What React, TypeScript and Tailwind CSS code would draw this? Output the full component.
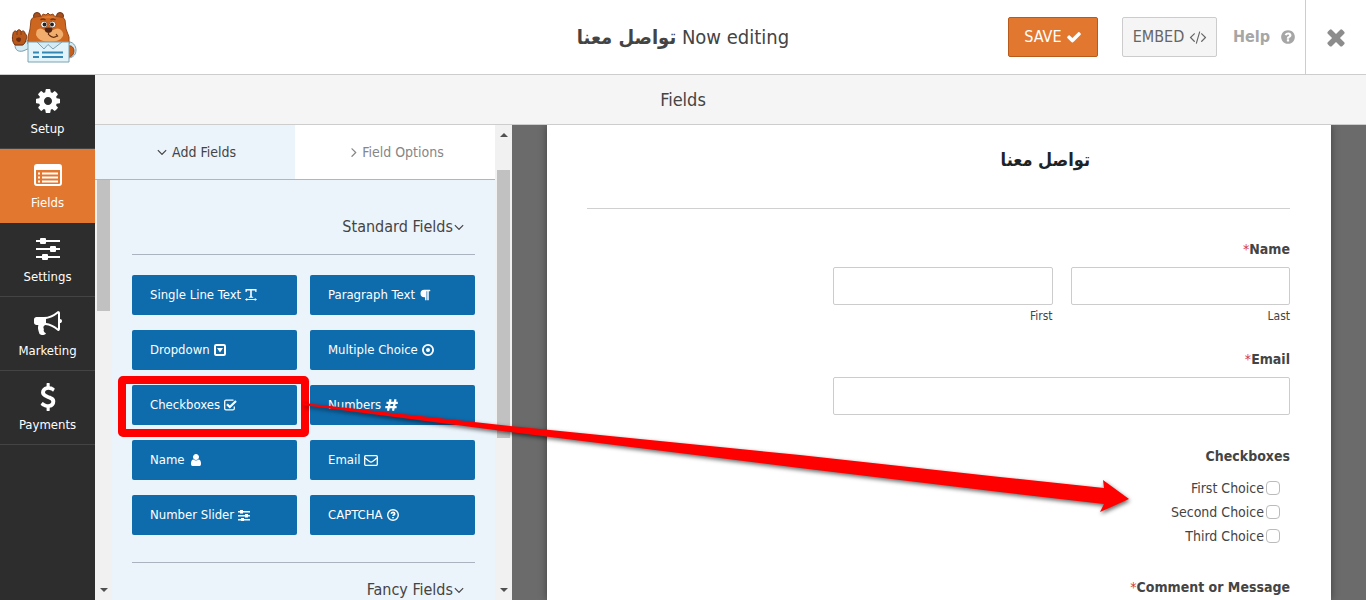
import type { ReactNode } from 'react';
import { FaParagraph } from 'react-icons/fa';

const paths = {
  cog: 'M1152 896q0-106-75-181t-181-75-181 75-75 181 75 181 181 75 181-75 75-181zm512-109v222q0 12-8 23t-20 13l-185 28q-19 54-39 91 35 50 107 138 10 12 10 25t-9 23q-27 37-99 108t-94 71q-12 0-26-9l-138-108q-44 23-91 38-16 136-29 186-7 28-36 28h-222q-14 0-24.5-8.5t-11.5-21.5l-28-184q-49-16-90-37l-141 107q-10 9-25 9-14 0-25-11-126-114-165-168-7-10-7-23 0-12 8-23 15-21 51-66.5t54-70.5q-27-50-41-99l-183-27q-13-2-21-12.5t-8-23.5v-222q0-12 8-23t19-13l186-28q14-46 39-92-40-57-107-138-10-12-10-24 0-10 9-23 26-36 98.5-107.5t94.5-71.5q13 0 26 10l138 107q44-23 91-38 16-136 29-186 7-28 36-28h222q14 0 24.5 8.5t11.5 21.5l28 184q49 16 90 37l142-107q9-9 24-9 13 0 25 10 129 119 165 170 7 8 7 22 0 12-8 23-15 21-51 66.5t-54 70.5q26 50 41 98l183 28q13 2 21 12.5t8 23.5z',
  bullhorn: 'M1664 640q53 0 90.5 37.5t37.5 90.5-37.5 90.5-90.5 37.5v384q0 52-38 90t-90 38q-417-347-812-380-58 19-91 66t-31 100.5 40 92.5q-20 33-23 65.5t6 58 33.5 55 48 50 61.5 50.5q-29 58-111.5 83t-168.5 11.5-132-55.5q-7-23-29.5-87.5t-32-94.5-23-89-15-101 3.5-98.5 22-110.5h-122q-66 0-113-47t-47-113v-192q0-66 47-113t113-47h480q435 0 896-384 52 0 90 38t38 90v384zm-128 604v-954q-394 302-768 343v270q377 42 768 341z',
  dollar: 'M1362 1185q0 153-99.5 263.5t-258.5 136.5v175q0 14-9 23t-23 9h-135q-13 0-22.5-9.5t-9.5-22.5v-175q-66-9-127.5-31t-101.5-44.5-74-48-46.5-37.5-17.5-18q-17-21-2-41l103-135q7-10 23-12 15-2 24 9l2 2q113 99 243 125 37 8 74 8 81 0 142.5-43t61.5-122q0-28-15-53t-33.5-42-58.5-37.5-66-32-80-32.5q-39-16-61.5-25t-61.5-26.5-62.5-31-56.5-35.5-53.5-42.5-43.5-49-35.5-58-21-66.5-8.5-78q0-138 98-242t255-134v-180q0-13 9.5-22.5t22.5-9.5h135q14 0 23 9t9 23v176q57 6 110.5 23t87 33.5 63.5 37.5 39 29 15 14q17 18 5 38l-81 146q-8 15-23 16-14 3-27-7-3-3-14.5-12t-39-26.5-58.5-32-74.5-26-85.5-11.5q-95 0-155 43t-60 111q0 26 8.5 48t29.5 41.5 39.5 33 56 31 60.5 27 70 27.5q53 20 81 31.5t76 35 75.5 42.5 62 50 53 63.5 31.5 76.5 13 94z',
  check: 'M1671 566q0 40-28 68l-724 724-136 136q-28 28-68 28t-68-28l-136-136-362-362q-28-28-28-68t28-68l136-136q28-28 68-28t68 28l294 295 656-657q28-28 68-28t68 28l136 136q28 28 28 68z',
  times: 'M1490 1322q0 40-28 68l-136 136q-28 28-68 28t-68-28l-294-294-294 294q-28 28-68 28t-68-28l-136-136q-28-28-28-68t28-68l294-294-294-294q-28-28-28-68t28-68l136-136q28-28 68-28t68 28l294 294 294-294q28-28 68-28t68 28l136 136q28 28 28 68t-28 68l-294 294 294 294q28 28 28 68z',
  code: 'M553 1399l-50 50q-10 10-23 10t-23-10l-466-466q-10-10-10-23t10-23l466-466q10-10 23-10t23 10l50 50q10 10 10 23t-10 23l-393 393 393 393q10 10 10 23t-10 23zm591-1067l-373 1291q-4 13-15.5 19.5t-23.5 2.5l-62-17q-13-4-19.5-15.5t-2.5-24.5l373-1291q4-13 15.5-19.5t23.5-2.5l62 17q13 4 19.5 15.5t2.5 24.5zm657 651l-466 466q-10 10-23 10t-23-10l-50-50q-10-10-10-23t10-23l393-393-393-393q-10-10-10-23t10-23l50-50q10-10 23-10t23 10l466 466q10 10 10 23t-10 23z',
  help: 'M1024 1376v-192q0-14-9-23t-23-9h-192q-14 0-23 9t-9 23v192q0 14 9 23t23 9h192q14 0 23-9t9-23zm256-672q0-88-55.5-163t-138.5-116-170-41q-243 0-371 213-15 24 8 42l132 100q7 6 19 6 16 0 25-12 53-68 86-92 34-24 86-24 48 0 85.5 26t37.5 59q0 38-20 61t-68 45q-63 28-115.5 86.5t-52.5 125.5v36q0 14 9 23t23 9h192q14 0 23-9t9-23q0-19 21.5-49.5t54.5-49.5q32-18 49-28.5t46-35 44.5-48 28-60.5 12.5-81zm384 192q0 209-103 385.5t-279.5 279.5-385.5 103-385.5-103-279.5-279.5-103-385.5 103-385.5 279.5-279.5 385.5-103 385.5 103 279.5 279.5 103 385.5z',
  angleDown: 'M1395 736q0 13-10 23l-466 466q-10 10-23 10t-23-10l-466-466q-10-10-10-23t10-23l50-50q10-10 23-10t23 10l393 393 393-393q10-10 23-10t23 10l50 50q10 10 10 23z',
  angleRight: 'M1171 960q0 13-10 23l-466 466q-10 10-23 10t-23-10l-50-50q-10-10-10-23t10-23l393-393-393-393q-10-10-10-23t10-23l50-50q10-10 23-10t23 10l466 466q10 10 10 23z',
  user: 'M1536 1399q0 109-62.5 187t-150.5 78h-854q-88 0-150.5-78t-62.5-187q0-85 8.5-160.5t31.5-152 58.5-131 94-89 134.5-34.5q131 128 313 128t313-128q76 0 134.5 34.5t94 89 58.5 131 31.5 152 8.5 160.5zm-256-887q0 159-112.5 271.5t-271.5 112.5-271.5-112.5-112.5-271.5 112.5-271.5 271.5-112.5 271.5 112.5 112.5 271.5z',
};

const Icon = ({ name, className }: { name: keyof typeof paths; className: string }) => (
  <svg viewBox="0 0 1792 1792" fill="currentColor" className={`shrink-0 overflow-visible ${className}`} aria-hidden="true">
    <path d={paths[name]} />
  </svg>
);

const ListIcon = () => (
  <svg viewBox="0 0 28 22" className="h-[22px] w-7" fill="none" stroke="currentColor" aria-hidden="true">
    <rect x="1" y="1" width="26" height="20" rx="2" strokeWidth="2" />
    <path d="M1 3.5h26" strokeWidth="5" />
    <path d="M4 9.5h2M4 13.5h2M4 17.5h2M8 9.5h16M8 13.5h16M8 17.5h16" strokeWidth="1.8" />
  </svg>
);

const SlidersIcon = () => (
  <svg viewBox="0 0 24 22" className="h-[22px] w-6" stroke="currentColor" fill="currentColor" aria-hidden="true">
    <path d="M0 3h24M0 11h24M0 19h24" strokeWidth="2" />
    <g stroke="none">
      <rect x="4" y="0" width="6" height="6" rx="1" />
      <rect x="14" y="8" width="6" height="6" rx="1" />
      <rect x="6" y="16" width="6" height="6" rx="1" />
    </g>
  </svg>
);

const SmallSlidersIcon = () => (
  <svg viewBox="0 0 12 11" className="h-[11px] w-3" fill="currentColor" aria-hidden="true">
    <path d="M0 1h12v1.500H0zM0 5h12v1.500H0zM0 9h12v1.500H0z" />
    <path d="M2 0h3v3.500H2zM7 4h3v3.500H7zM3 8h3v3H3z" />
  </svg>
);

const TextWidthIcon = () => (
  <svg viewBox="0 0 12 12" className="size-3" fill="currentColor" aria-hidden="true">
    <path d="M.5 0h11v3h-1l-.6-1.400H6.800v5.900l1.400.4v.8H3.800v-.8l1.400-.4V1.600H2.100L1.500 3h-1z" />
    <path d="M0 10.500 2.200 8.900v1h7.600v-1L12 10.500 9.800 12v-.9H2.200v.9z" />
  </svg>
);

const HashIcon = () => (
  <svg viewBox="0 0 13 12" className="h-3 w-[13px]" fill="none" stroke="currentColor" strokeWidth="2.200" aria-hidden="true">
    <path d="M5.500.3 3 11.700M10.500.3 8 11.700M1.500 3.800h11.300M.3 8.200h11.300" />
  </svg>
);

const CaretSquareIcon = () => (
  <svg viewBox="0 0 12 12" className="size-3" aria-hidden="true">
    <rect x="1" y="1" width="10" height="10" rx="1.2" fill="none" stroke="currentColor" strokeWidth="2" />
    <path d="M3 4h6L6 8.5z" fill="currentColor" />
  </svg>
);

const DotCircleIcon = () => (
  <svg viewBox="0 0 12 12" className="size-3" aria-hidden="true">
    <circle cx="6" cy="6" r="5.1" fill="none" stroke="currentColor" strokeWidth="1.8" />
    <circle cx="6" cy="6" r="2" fill="currentColor" />
  </svg>
);

const CheckSquareIcon = () => (
  <svg viewBox="0 0 13 12" className="h-3 w-[13px]" fill="none" stroke="currentColor" aria-hidden="true">
    <path d="M9.5 1.2H2A1.3 1.3 0 0 0 .7 2.500v7A1.300 1.300 0 0 0 2 10.800h7a1.300 1.300 0 0 0 1.300-1.300V7.500" strokeWidth="1.3" />
    <path d="M3 5.200 5.800 8 12 2" strokeWidth="2.200" />
  </svg>
);

const EnvelopeIcon = () => (
  <svg viewBox="0 0 14 11" className="h-[11px] w-3.5" fill="none" stroke="currentColor" strokeWidth="1.3" aria-hidden="true">
    <rect x=".7" y=".7" width="12.6" height="9.6" rx="1" />
    <path d="M1 3l4.500 3.600q1.500 1.200 3 0L13 3" />
  </svg>
);

const QuestionCircleIcon = () => (
  <svg viewBox="0 0 12 12" className="size-3" fill="none" stroke="currentColor" aria-hidden="true">
    <circle cx="6" cy="6" r="5.300" strokeWidth="1.400" />
    <path d="M4.200 4.700Q4.700 3.400 6 3.400q1.700 0 1.700 1.300 0 .8-.9 1.200-.8.400-.8 1.100" strokeWidth="1.700" />
    <path d="M6 7.900v1.400" strokeWidth="1.700" />
  </svg>
);

const Logo = () => (
  <svg viewBox="0 0 66 52" className="h-[52px] w-[66px]" role="img" aria-label="WPForms">
    {/* sleeves */}
    <path d="M4 34c0 5 3 7 8 6l7-3v-8q-6 1-7 5z" fill="#d5ebf3" stroke="#7a9cab" />
    <path d="M56 31c6-1 9 4 9 8s-2 7-7 8z" fill="#d5ebf3" stroke="#7a9cab" />
    <path d="M57 35c4-1 6 2 6 5s-2 6-6 6z" fill="#c65f1c" stroke="#793817" strokeWidth=".8" />
    {/* hand */}
    <path d="M4 34C1 31 1 26 2 23c0-3 3-4 4-2 0-3 4-3 4 0 2-2 4-1 4 2 2 0 2 3 1 6-1 3-2 5-4 5z" fill="#b9581b" stroke="#743313" />
    <path d="M5 28c1-2 5-2 5 0s-1 3-2 3-3-1-3-3z" fill="#6d2f13" />
    <path d="M6 21v3M10 21v3" stroke="#743313" strokeWidth=".8" />
    {/* head */}
    <circle cx="26" cy="5" r="3.500" fill="#a84f1b" stroke="#6f3417" />
    <circle cx="49" cy="5" r="3.500" fill="#a84f1b" stroke="#6f3417" />
    <path d="M20 9q1-3 5-3l6-1 1-2 3 1 2-2 2 2 3-1 1 2 6 1q4 0 5 3l1 9 3 8v7H17v-7l2-8z" fill="#cd6720" stroke="#964819" />
    <path d="M31 7q7-2 13 0" fill="none" stroke="#e07b31" strokeWidth="2" />
    <path d="M26 19q3-3 7 0l4-2 5 2q5-3 8 0 3 3 2 6-3 6-14 6-10 0-13-7 0-3 1-5z" fill="#f0ad6c" />
    <circle cx="33" cy="13.500" r="3.300" fill="#fff" stroke="#743313" strokeWidth=".7" />
    <circle cx="41.500" cy="13.500" r="3.300" fill="#fff" stroke="#743313" strokeWidth=".7" />
    <circle cx="33.500" cy="13.500" r="1.900" fill="#25211f" />
    <circle cx="41" cy="13.500" r="1.900" fill="#25211f" />
    <path d="M29.500 9q2.500-2 5 0M39.500 9q2.500-2 5 0" fill="none" stroke="#743313" strokeWidth="1.300" />
    <path d="M33.500 17.500q4-2 8 0 0 4-4 4.500-4-.5-4-4.500z" fill="#502414" />
    <path d="M37.500 21v3M38 24q4 4 8 1M45 23l2 2.500" fill="none" stroke="#66300f" strokeWidth="1.200" />
    {/* shirt */}
    <path d="M17 31h41v20H17z" fill="#e2f4f9" stroke="#7da2b2" strokeLinejoin="round" />
    <path d="M26 31l7 7 4-4.500 5 4.500 9-7z" fill="#d4ebf3" stroke="#7da2b2" />
    <path d="M22 41.500h6M31 41.500h21M22 46h6M31 46h21" stroke="#3287b5" strokeWidth="2" />
  </svg>
);

const menuItems: { label: string; icon: ReactNode; active?: boolean }[] = [
  { label: 'Setup', icon: <Icon name="cog" className="size-7" /> },
  { label: 'Fields', icon: <ListIcon />, active: true },
  { label: 'Settings', icon: <SlidersIcon /> },
  { label: 'Marketing', icon: <Icon name="bullhorn" className="size-7" /> },
  { label: 'Payments', icon: <Icon name="dollar" className="size-7" /> },
];

const standardFields: { label: string; icon: ReactNode }[] = [
  { label: 'Single Line Text', icon: <TextWidthIcon /> },
  { label: 'Paragraph Text', icon: <FaParagraph className="size-3" /> },
  { label: 'Dropdown', icon: <CaretSquareIcon /> },
  { label: 'Multiple Choice', icon: <DotCircleIcon /> },
  { label: 'Checkboxes', icon: <CheckSquareIcon /> },
  { label: 'Numbers', icon: <HashIcon /> },
  { label: 'Name', icon: <Icon name="user" className="size-3.5" /> },
  { label: 'Email', icon: <EnvelopeIcon /> },
  { label: 'Number Slider', icon: <SmallSlidersIcon /> },
  { label: 'CAPTCHA', icon: <QuestionCircleIcon /> },
];

const choices = ['First Choice', 'Second Choice', 'Third Choice'];

const Required = () => <span className="font-normal text-[#d63638]">*</span>;

const ScrollArrow = ({ up }: { up?: boolean }) => (
  <svg viewBox="0 0 8 4" className="mx-auto h-1 w-2 shrink-0" fill="#505050" aria-hidden="true">
    <path d={up ? 'M0 4h8L4 0z' : 'M0 0h8L4 4z'} />
  </svg>
);

const Header = () => (
  <header className="grid h-[75px] shrink-0 grid-cols-[1fr_auto_1fr] items-center border-b border-[#cdcdcd] bg-white">
    <div className="pl-[11px]">
      <Logo />
    </div>
    <h1 dir="rtl" className="text-xl">
      Now editing <strong>تواصل معنا</strong>
    </h1>
    <div className="flex h-full items-center justify-end">
      <button className="mr-6 flex h-10 w-[90px] items-center justify-center gap-1 rounded-xs border border-[#b85a1b] bg-[#e27730] text-base text-white">
        SAVE
        <Icon name="check" className="size-4" />
      </button>
      <button className="mr-4 flex h-10 w-[95px] items-center justify-center gap-1.5 rounded-xs border border-[#ccc] bg-[#f5f5f5] text-base text-[#666]">
        EMBED
        <Icon name="code" className="size-4" />
      </button>
      <a href="#help" className="flex items-center gap-2.5 pr-[9px] text-base font-bold text-[#a6a6a6]">
        Help
        <Icon name="help" className="size-4" />
      </a>
      <button aria-label="Close" className="flex h-full w-[61px] items-center justify-center border-l border-[#cdcdcd] text-[#8c8c8c]">
        <Icon name="times" className="size-[26px]" />
      </button>
    </div>
  </header>
);

const Sidebar = () => (
  <nav className="w-[95px] shrink-0 bg-[#2d2d2d]">
    {menuItems.map((item) => (
      <a
        key={item.label}
        href={`#${item.label.toLowerCase()}`}
        className={`flex h-[74px] flex-col items-center border-b pt-3 text-[13px] leading-4 text-white ${item.active ? 'border-[#e27730] bg-[#e27730]' : 'border-[#444]'
          }`}
      >
        <span className="mb-1.5 flex h-7 items-center">{item.icon}</span>
        {item.label}
      </a>
    ))}
  </nav>
);

const FieldsPanel = () => (
  <section className="flex w-[417px] shrink-0 bg-[#ebf3fb]">
    <div className="flex min-w-0 flex-1 flex-col">
      <div className="flex h-[55px] shrink-0 border-b border-[#b0b6bd] text-sm">
        <button className="flex flex-1 items-center justify-center gap-0.5">
          <Icon name="angleDown" className="size-4" />
          Add Fields
        </button>
        <button className="flex flex-1 items-center justify-center bg-white text-[#868686]">
          <Icon name="angleRight" className="size-4" />
          Field Options
        </button>
      </div>
      <div className="flex min-h-0 flex-1">
        <div className="flex w-[17px] shrink-0 flex-col justify-between bg-[#f1f1f1] pb-2">
          <div className="mx-auto h-[131px] w-[13px] bg-[#c1c1c1]" />
          <ScrollArrow />
        </div>
        <div className="min-w-0 flex-1 overflow-hidden px-5 pt-9">
          <h3 className="flex items-center justify-end border-b border-[#aab4be] pr-2 pb-4 text-base leading-[22px]">
            Standard Fields
            <Icon name="angleDown" className="-ml-0.5 size-4" />
          </h3>
          <div className="mt-5 grid grid-cols-2 gap-x-[13px] gap-y-[15px]">
            {standardFields.map((field) => (
              <button key={field.label} className="flex h-10 items-center gap-1 rounded-xs bg-[#0e6cad] pl-[18px] text-[13px] text-white">
                {field.label}
                {field.icon}
              </button>
            ))}
          </div>
          <h3 className="mt-[27px] flex items-center justify-end border-t border-[#aab4be] pt-4 pr-2 text-base leading-[22px]">
            Fancy Fields
            <Icon name="angleDown" className="-ml-0.5 size-4" />
          </h3>
        </div>
      </div>
    </div>
    <div className="flex w-[17px] shrink-0 flex-col bg-[#f1f1f1] py-2">
      <ScrollArrow up />
      <div className="mx-auto mt-[33px] mb-auto h-[268px] w-[13px] bg-[#c1c1c1]" />
      <ScrollArrow />
    </div>
  </section>
);

const inputClass = 'h-[38px] w-full rounded-xs border border-[#ccc] bg-white';

const FormPreview = () => (
  <main className="min-w-0 flex-1 overflow-hidden bg-[#6b6b6b] px-[35px]">
    <form className="h-full bg-white pt-5 pr-[41px] pl-10 text-right text-sm leading-5 shadow-[0_0_8px_rgba(0,0,0,0.4)]">
      <h2 className="border-b border-[#d0d0d0] pr-[200px] pb-[33px] text-lg leading-[30px] font-bold text-[#1d2327]">تواصل معنا</h2>

      <fieldset className="mt-[30px]">
        <legend className="ml-auto font-bold">
          <Required />Name
        </legend>
        <div className="mt-2 ml-auto flex w-[65%] gap-[18px] text-xs leading-[14px]">
          <label className="flex flex-1 flex-col gap-1">
            <input type="text" className={inputClass} />
            First
          </label>
          <label className="flex flex-1 flex-col gap-1">
            <input type="text" className={inputClass} />
            Last
          </label>
        </div>
      </fieldset>

      <div className="mt-[26px]">
        <label htmlFor="email" className="block font-bold">
          <Required />Email
        </label>
        <div className="mt-2 ml-auto flex w-[65%]">
          <input id="email" type="email" className={inputClass} />
        </div>
      </div>

      <fieldset className="mt-[31px]">
        <legend className="ml-auto font-bold">Checkboxes</legend>
        <div className="mt-2.5 pr-2.5">
          {choices.map((choice) => (
            <label key={choice} className="flex h-6 items-center justify-end gap-0.5">
              {choice}
              <input type="checkbox" className="size-3.5 appearance-none rounded-sm border border-[#bbb] bg-white" />
            </label>
          ))}
        </div>
      </fieldset>

      <p className="mt-[29px] font-bold">
        <Required />Comment or Message
      </p>
    </form>
  </main>
);

// highlight box and arrow that lie over the builder
const Annotation = () => (
  <svg viewBox="0 0 1366 600" className="pointer-events-none absolute top-0 left-0 h-[600px] w-[1366px]" aria-hidden="true">
    <rect x="122" y="380" width="183" height="53" rx="1" fill="none" stroke="#fe0000" strokeWidth="8" strokeLinejoin="round" />
    <path
      d="M303 403L510 426L800 455L1000 477L1104 488L1103 480L1129 499L1100 512L1104 504L1000 492L800 468L510 432L303 405z"
      fill="#fe0000"
      className="drop-shadow-[1px_2px_2px_rgba(0,0,0,0.6)]"
    />
  </svg>
);

export default function App() {
  return (
    <div className="relative flex h-screen flex-col overflow-hidden font-['DejaVu_Sans_Condensed','DejaVu_Sans',sans-serif] text-[#444]">
      <Header />
      <div className="flex min-h-0 flex-1">
        <Sidebar />
        <div className="flex min-w-0 flex-1 flex-col">
          <div className="flex h-[50px] shrink-0 items-center justify-center border-b border-[#cdcdcd] bg-[#f5f5f5] pr-[95px] text-lg">
            Fields
          </div>
          <div className="flex min-h-0 flex-1">
            <FieldsPanel />
            <FormPreview />
          </div>
        </div>
      </div>
      <Annotation />
    </div>
  );
}
